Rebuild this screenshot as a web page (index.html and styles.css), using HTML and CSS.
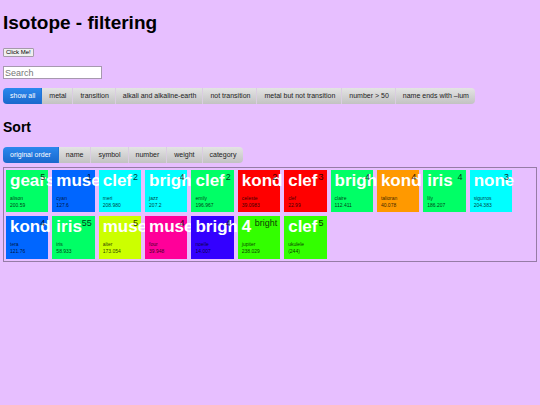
FILE: index.html
```html
<!DOCTYPE html>
<html lang="en">
<head>
<meta charset="utf-8">
<title>Isotope - filtering</title>
<link rel="stylesheet" href="styles.css">
</head>
<body>
<h1>Isotope - filtering</h1>
<button class="click" type="button">Click Me!</button>
<input class="search" type="text" placeholder="Search" aria-label="Search">
<div class="group filters">
<button class="active" type="button">show all</button>
<button type="button">metal</button>
<button type="button">transition</button>
<button type="button">alkali and alkaline-earth</button>
<button type="button">not transition</button>
<button type="button">metal but not transition</button>
<button type="button">number &gt; 50</button>
<button type="button">name ends with –ium</button>
</div>
<h2>Sort</h2>
<div class="group sorts">
<button class="active" type="button">original order</button>
<button type="button">name</button>
<button type="button">symbol</button>
<button type="button">number</button>
<button type="button">weight</button>
<button type="button">category</button>
</div>
<div class="grid">
<div class="tile green"><p class="number">5</p><p class="symbol">gears</p><p class="name">alison</p><p class="weight">200.59</p></div>
<div class="tile blue"><p class="number">1</p><p class="symbol">muse</p><p class="name">cyan</p><p class="weight">127.6</p></div>
<div class="tile cyan"><p class="number">2</p><p class="symbol">clef</p><p class="name">meri</p><p class="weight">208.980</p></div>
<div class="tile cyan"><p class="number">4</p><p class="symbol">bright</p><p class="name">jazz</p><p class="weight">207.2</p></div>
<div class="tile green"><p class="number">2</p><p class="symbol">clef</p><p class="name">emily</p><p class="weight">196.967</p></div>
<div class="tile red"><p class="number">2</p><p class="symbol">kond</p><p class="name">celeste</p><p class="weight">39.0983</p></div>
<div class="tile red"><p class="number">3</p><p class="symbol">clef</p><p class="name">clef</p><p class="weight">22.99</p></div>
<div class="tile green"><p class="number">4</p><p class="symbol">bright</p><p class="name">claire</p><p class="weight">112.411</p></div>
<div class="tile orange"><p class="number">4</p><p class="symbol">kond</p><p class="name">talioran</p><p class="weight">40.078</p></div>
<div class="tile green"><p class="number">4</p><p class="symbol">iris</p><p class="name">lily</p><p class="weight">186.207</p></div>
<div class="tile cyan"><p class="number">3</p><p class="symbol">none</p><p class="name">sigurros</p><p class="weight">204.383</p></div>
<div class="tile blue"><p class="number">4</p><p class="symbol">kond</p><p class="name">tera</p><p class="weight">121.76</p></div>
<div class="tile green"><p class="number">55</p><p class="symbol">iris</p><p class="name">iris</p><p class="weight">58.933</p></div>
<div class="tile yellow"><p class="number">5</p><p class="symbol">muse</p><p class="name">alter</p><p class="weight">173.054</p></div>
<div class="tile pink"><p class="number">4</p><p class="symbol">muse</p><p class="name">four</p><p class="weight">39.948</p></div>
<div class="tile indigo"><p class="number">4</p><p class="symbol">bright</p><p class="name">noelle</p><p class="weight">14.007</p></div>
<div class="tile lime"><p class="number">bright</p><p class="symbol">4</p><p class="name">jupiter</p><p class="weight">238.029</p></div>
<div class="tile lime"><p class="number">5</p><p class="symbol">clef</p><p class="name">ukulele</p><p class="weight">(244)</p></div>
</div>
</body>
</html>
```
FILE: styles.css
```css
* { box-sizing: border-box; }

body {
  margin: 0;
  padding: 12px 3px;
  background: #e7bfff;
  color: #000;
  font-family: "Liberation Sans", Arial, sans-serif;
}

h1 {
  margin: 0 0 14px;
  font-size: 19px;
  line-height: 22px;
}

h2 {
  margin: 15px 0 12px;
  font-size: 14px;
  line-height: 16px;
}

.click {
  display: block;
  height: 9px;
  padding: 0 2px;
  border: 1px solid #a49aaa;
  border-radius: 1px;
  background: #efefef;
  color: #000;
  font: 6px/7px "Liberation Sans", Arial, sans-serif;
}

.search {
  display: block;
  width: 99px;
  height: 13px;
  margin: 9px 0;
  padding: 0 1px;
  border: 1px solid #a699ae;
  background: #fff;
  font: 9px/11px "Liberation Sans", Arial, sans-serif;
}

.search::placeholder { color: #777; }

.group {
  display: flex;
  width: max-content;
  overflow: hidden;
  border-radius: 4px;
}

.group button {
  height: 16px;
  padding: 0 7px;
  border: 0;
  border-right: 1px solid #dacde1;
  background: linear-gradient(#e4e4e4, #c2c2c2);
  color: #222;
  font: 7px/16px "Liberation Sans", Arial, sans-serif;
  white-space: nowrap;
}

.filters button { padding: 0 6px 0 7px; }

.group button:last-child { border-right: 0; }

.group .active {
  border-right-color: #1f74d8;
  background: linear-gradient(#2b88ee, #1a68cc);
  color: #fff;
}

.grid {
  display: grid;
  grid-template-columns: repeat(11, 1fr);
  gap: 4px;
  margin-top: 4px;
  padding: 2px 24px 2px 2px;
  border: 1px solid #967ca6;
}

.tile {
  position: relative;
  min-width: 0;
  aspect-ratio: 1;
  padding: 1px 4px 0;
  color: rgba(0, 0, 0, 0.8);
}

.tile p {
  margin: 0;
  white-space: nowrap;
}

.tile .number {
  position: absolute;
  z-index: 1;
  top: 2px;
  right: 3px;
  font-size: 9px;
  line-height: 11px;
}

.tile .symbol {
  padding-bottom: 4px;
  color: #fff;
  font-size: 17px;
  font-weight: bold;
  line-height: 20px;
}

.name,
.weight {
  font-size: 5px;
  line-height: 7px;
}

.green { background: #00ff66; }
.blue { background: #0066ff; }
.cyan { background: #00ffff; }
.red { background: #ff0000; }
.orange { background: #ff9900; }
.yellow { background: #ccff00; }
.pink { background: #ff0099; }
.indigo { background: #3300ff; }
.lime { background: #33ff00; }
```
